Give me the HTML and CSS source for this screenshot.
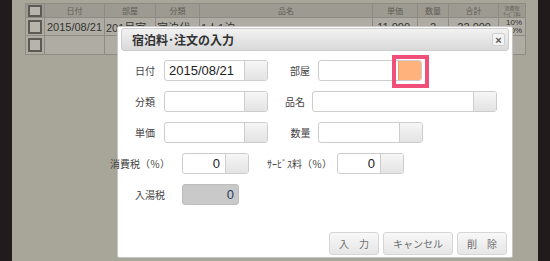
FILE: index.html
```html
<!DOCTYPE html>
<html lang="ja">
<head>
    <meta charset="UTF-8">
    <title>宿泊料・注文の入力</title>
    <link rel="stylesheet" href="styles.css">
</head>
<body>
    <div class="frame">
        <div class="edge"></div>
        <div class="page">
            <table class="list">
                <colgroup>
                    <col class="w-chk"><col class="w-date"><col class="w-room"><col class="w-kind">
                    <col class="w-name"><col class="w-price"><col class="w-qty"><col class="w-sum"><col class="w-tax">
                </colgroup>
                <thead>
                    <tr>
                        <th><span class="box"></span></th>
                        <th>日付</th>
                        <th>部屋</th>
                        <th>分類</th>
                        <th>品名</th>
                        <th>単価</th>
                        <th>数量</th>
                        <th>合計</th>
                        <th class="tax-head"><span>消費税</span><span>ｻｰﾋﾞｽ料</span></th>
                    </tr>
                </thead>
                <tbody>
                    <tr class="filled">
                        <td><span class="box"></span></td>
                        <td class="center">2015/08/21</td>
                        <td class="left">201号室</td>
                        <td class="left">宿泊代</td>
                        <td class="left">1人1泊</td>
                        <td class="right">11,000</td>
                        <td class="center">2</td>
                        <td class="right">22,000</td>
                        <td class="tax"><span>10%</span><span>10%</span></td>
                    </tr>
                    <tr class="empty">
                        <td><span class="box"></span></td>
                        <td></td><td></td><td></td><td></td><td></td><td></td><td></td><td></td>
                    </tr>
                </tbody>
            </table>
        </div>
        <div class="edge"></div>
    </div>

    <div class="dialog">
        <div class="dialog-title">
            <span>宿泊料･注文の入力</span>
            <button class="close">×</button>
        </div>
        <div class="form">
            <div class="row">
                <label class="lbl lbl-left">日付</label>
                <div class="field f-main"><span class="val">2015/08/21</span><span class="pick"></span></div>
                <label class="lbl lbl-room">部屋</label>
                <div class="field f-room"><span class="val"></span><span class="pick pick-orange"></span></div>
            </div>
            <div class="row">
                <label class="lbl lbl-left">分類</label>
                <div class="field f-main"><span class="val"></span><span class="pick"></span></div>
                <label class="lbl lbl-name">品名</label>
                <div class="field f-name"><span class="val"></span><span class="pick"></span></div>
            </div>
            <div class="row">
                <label class="lbl lbl-left">単価</label>
                <div class="field f-main"><span class="val"></span><span class="pick"></span></div>
                <label class="lbl lbl-qty">数量</label>
                <div class="field f-qty"><span class="val"></span><span class="pick"></span></div>
            </div>
            <div class="row">
                <label class="lbl lbl-ctax">消費税（％）</label>
                <div class="field f-rate"><span class="val num">0</span><span class="pick"></span></div>
                <label class="lbl lbl-svc">ｻｰﾋﾞｽ料（％）</label>
                <div class="field f-rate"><span class="val num">0</span><span class="pick"></span></div>
            </div>
            <div class="row">
                <label class="lbl lbl-bath">入湯税</label>
                <div class="field f-bath"><span class="val num">0</span></div>
            </div>
        </div>
        <div class="actions">
            <button class="btn btn-short">入　力</button>
            <button class="btn btn-long">キャンセル</button>
            <button class="btn btn-short">削　除</button>
        </div>
    </div>

    <div class="mark"></div>
</body>
</html>
```

FILE: styles.css
```css
body {
    margin: 0;
    background-color: #a8a699;
    font-family: 'Liberation Sans', 'Noto Sans CJK JP', sans-serif;
}

.frame {
    display: flex;
    height: 261px;
}

.edge {
    width: 12px;
    background-color: #221b1b;
}

.page {
    flex: 1;
}

/* list behind the dialog */
.list {
    border-collapse: collapse;
    table-layout: fixed;
    width: 500px;
    margin: 3px 0 0 13px;
    font-size: 11px;
    color: #333;
}

.w-chk { width: 19px; }
.w-date { width: 60px; }
.w-room { width: 51px; }
.w-kind { width: 44px; }
.w-name { width: 173px; }
.w-price { width: 45px; }
.w-qty { width: 31px; }
.w-sum { width: 50px; }
.w-tax { width: 27px; }

.list th, .list td {
    border: 1px solid #8d8b83;
    padding: 0;
    white-space: nowrap;
    overflow: hidden;
}

.list th {
    height: 13px;
    background-color: #9d9b91;
    font-size: 8px;
    font-weight: normal;
    color: #5e5c56;
    font-family: 'Noto Sans CJK JP', sans-serif;
}

.list td {
    background-color: #afada3;
}

.filled td { height: 17px; }
.empty td { height: 18px; }

.list .center { text-align: center; }
.list .left { text-align: left; padding-left: 1px; }
.list .right { text-align: right; padding-right: 7px; }

.box {
    display: block;
    width: 10px;
    height: 10px;
    margin: 0 auto;
    border: 2px solid #5b5a54;
    background-color: #b7b5ab;
}

.list th .box {
    height: 8px;
}

.tax-head span {
    display: block;
    font-size: 5px;
    line-height: 6px;
}

.tax span {
    display: block;
    font-size: 8px;
    line-height: 8px;
    text-align: right;
    padding-right: 3px;
}

/* dialog */
.dialog {
    position: absolute;
    left: 117px;
    top: 26px;
    width: 396px;
    height: 232px;
    box-sizing: border-box;
    padding: 1px 3px 2px;
    background-color: #fff;
    border: 1px solid #c6c6c6;
    border-radius: 2px;
    display: flex;
    flex-direction: column;
    font-family: 'Noto Sans CJK JP', sans-serif;
}

.dialog-title {
    height: 23px;
    box-sizing: border-box;
    padding: 0 3px 0 10px;
    border: 1px solid #cdcdcd;
    border-radius: 3px;
    background: linear-gradient(#f2f2f2, #d9d9d9);
    display: flex;
    align-items: center;
    justify-content: space-between;
    font-size: 12px;
    font-weight: bold;
    color: #333;
}

.close {
    width: 13px;
    height: 13px;
    padding: 0;
    border: 1px solid #d0d0d0;
    border-radius: 2px;
    background: #f3f3f3;
    color: #555;
    font-size: 11px;
    font-weight: bold;
    line-height: 10px;
    font-family: 'Liberation Sans', sans-serif;
}

.form {
    padding-top: 9px;
    display: flex;
    flex-direction: column;
    gap: 10px;
}

.row {
    display: flex;
    align-items: center;
    height: 21px;
}

.lbl {
    flex: none;
    font-size: 10px;
    color: #444;
    text-align: center;
    white-space: nowrap;
}

.lbl-left { width: 38px; margin-left: 5px; }
.lbl-room { width: 36px; margin-left: 14px; }
.lbl-name { width: 34px; margin-left: 10px; }
.lbl-qty { width: 35px; margin-left: 15px; }
.lbl-ctax { width: 72px; margin-left: -11px; text-align: left; }
.lbl-svc { width: 70px; margin-left: 18px; text-align: left; }
.lbl-bath { width: 47px; margin-left: 14px; text-align: left; }

.field {
    flex: none;
    display: flex;
    height: 21px;
    box-sizing: border-box;
    border: 1px solid #cdcdcd;
    border-radius: 3px;
    background-color: #fff;
    overflow: hidden;
}

.f-main { width: 104px; }
.f-room { width: 104px; }
.f-name { width: 185px; }
.f-qty { width: 105px; }
.f-rate { width: 67px; }
.f-bath {
    width: 57px;
    background-color: #c9c9c9;
    border-color: #bdbdbd;
}

.val {
    flex: 1;
    padding-left: 4px;
    font-family: 'Liberation Sans', sans-serif;
    font-size: 13px;
    line-height: 19px;
    color: #222;
}

.val.num {
    text-align: right;
    padding-right: 5px;
}

.f-bath .val {
    color: #2b3b5c;
    padding-right: 4px;
}

.pick {
    width: 22px;
    border-left: 1px solid #cdcdcd;
    background: linear-gradient(#f6f6f6, #e3e3e3);
}

.pick-orange {
    background: #ffb27b;
    border-left-color: #e3a070;
}

.actions {
    margin-top: auto;
    padding-right: 2px;
    display: flex;
    justify-content: flex-end;
    gap: 4px;
}

.btn {
    height: 23px;
    padding: 0;
    border: 1px solid #d6d6d6;
    border-radius: 3px;
    background: linear-gradient(#f8f8f8, #e6e6e6);
    color: #6e6e6e;
    font-size: 10px;
    font-family: 'Noto Sans CJK JP', sans-serif;
}

.btn-short { width: 50px; }
.btn-long { width: 70px; }

/* highlight around the room picker */
.mark {
    position: absolute;
    left: 392px;
    top: 55px;
    width: 37px;
    height: 33px;
    box-sizing: border-box;
    border: 4px solid #ef4f79;
}
```
